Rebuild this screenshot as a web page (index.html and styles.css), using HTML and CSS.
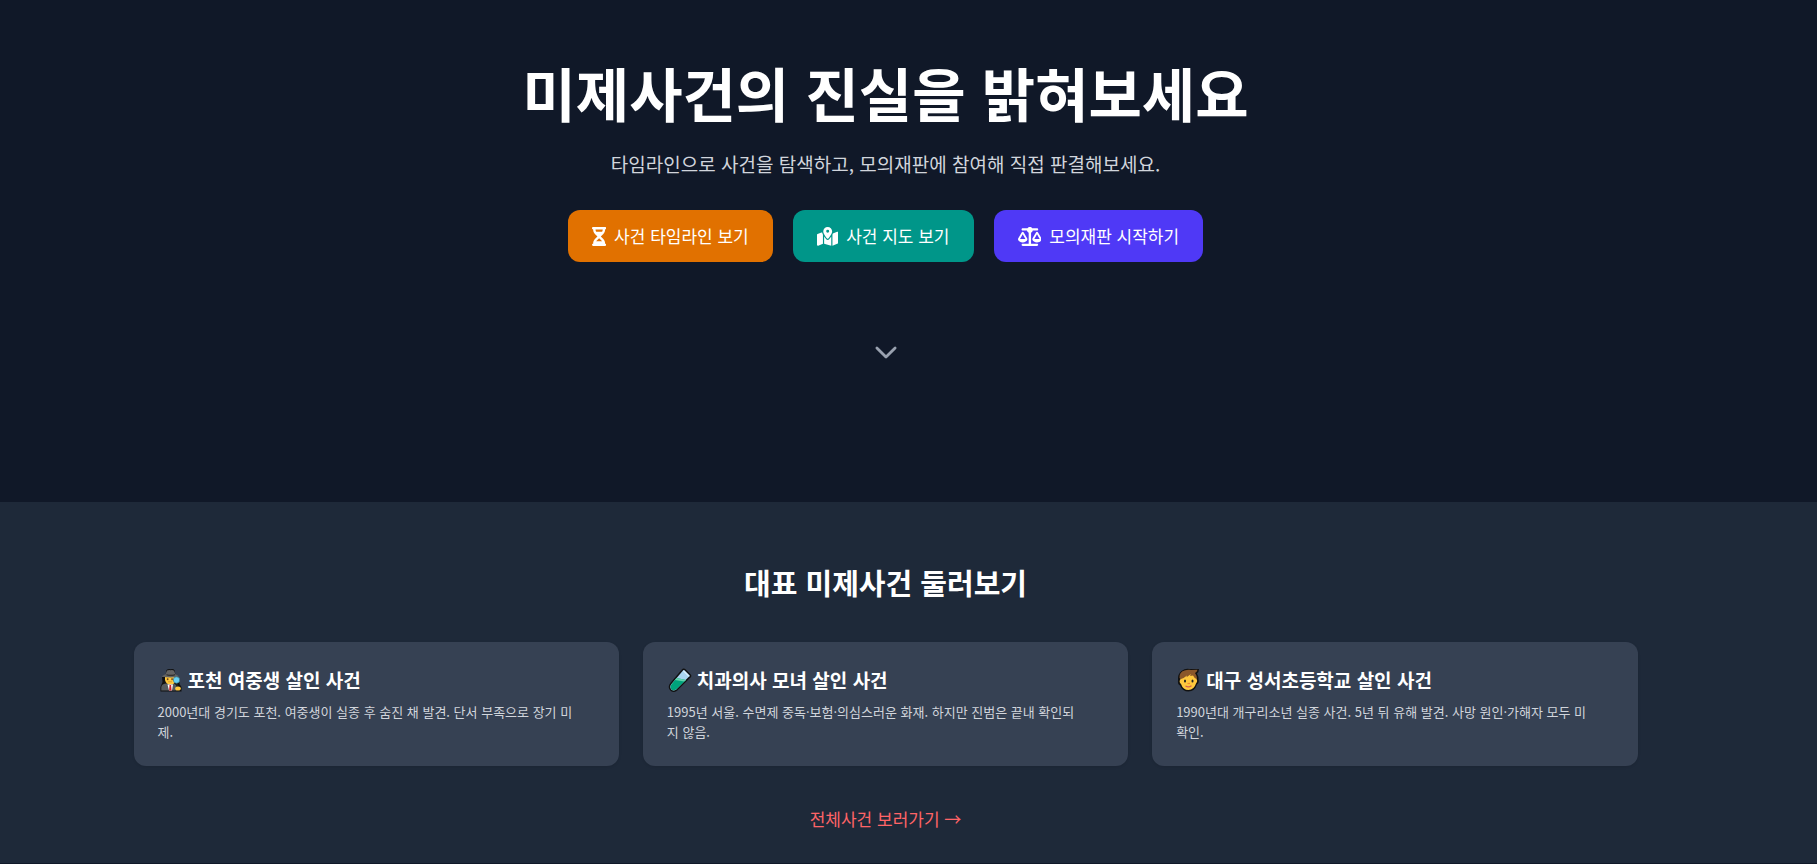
FILE: index.html
```html
<!DOCTYPE html>
<html lang="ko">
<head>
  <meta charset="UTF-8" />
  <meta name="viewport" content="width=device-width, initial-scale=1.0"/>
  <title>미제사건의 진실을 밝혀보세요</title>
  <link rel="stylesheet" href="styles.css">
</head>
<body>

  <!-- Hero -->
  <header class="hero">
    <h1>미제사건의 진실을 밝혀보세요</h1>
    <p class="subtitle">타임라인으로 사건을 탐색하고, 모의재판에 참여해 직접 판결해보세요.</p>
    <nav class="actions">
      <a class="btn btn-timeline" href="#timeline">
        <svg class="icon" viewBox="0 0 384 512" aria-hidden="true"><path d="M32 0C14.3 0 0 14.3 0 32S14.3 64 32 64V75c0 42.4 16.9 83.1 46.9 113.1L146.7 256 78.9 323.9C48.9 353.9 32 394.6 32 437v11c-17.7 0-32 14.3-32 32s14.3 32 32 32H64 320h32c17.7 0 32-14.3 32-32s-14.3-32-32-32V437c0-42.4-16.9-83.1-46.9-113.1L237.3 256l67.9-67.9c30-30 46.9-70.7 46.9-113.1V64c17.7 0 32-14.3 32-32s-14.3-32-32-32H320 64 32zM96 75V64H288V75c0 19-5.6 37.4-16 53H112c-10.3-15.6-16-34-16-53zm16 309c3.5-5.3 7.6-10.3 12.1-14.9L192 301.3l67.9 67.9c4.6 4.6 8.6 9.6 12.1 14.9H112z"/></svg>
        사건 타임라인 보기
      </a>
      <a class="btn btn-map" href="#map">
        <svg class="icon" viewBox="0 0 576 512" aria-hidden="true"><path d="M408 120c0 54.6-73.1 151.9-105.2 192c-7.7 9.6-22 9.6-29.6 0C241.1 271.9 168 174.6 168 120C168 53.7 221.7 0 288 0s120 53.7 120 120zm8 80.4c3.5-6.9 6.7-13.8 9.6-20.6c.5-1.2 1-2.5 1.5-3.7l116-46.4C558.9 123.4 576 135 576 152V422.8c0 9.8-6 18.6-15.1 22.3L416 503V200.4zM137.6 138.3c2.4 14.1 7.2 28.3 12.8 41.5c2.9 6.8 6.1 13.7 9.6 20.6V451.8L32.9 502.7C17.1 509 0 497.4 0 480.4V209.6c0-9.8 6-18.6 15.1-22.3l122.6-49zM327.8 332c13.9-17.4 35.7-45.7 56.2-77V504.3L192 449.4V255c20.5 31.3 42.3 59.6 56.2 77c20.5 25.6 59.1 25.6 79.6 0zM288 152a40 40 0 1 0 0-80 40 40 0 1 0 0 80z"/></svg>
        사건 지도 보기
      </a>
      <a class="btn btn-trial" href="#trial">
        <svg class="icon" viewBox="0 0 640 512" aria-hidden="true"><path d="M384 32H512c17.7 0 32 14.3 32 32s-14.3 32-32 32H398.4c-5.2 25.8-22.9 47.1-46.4 57.3V448H512c17.7 0 32 14.3 32 32s-14.3 32-32 32H320 128c-17.7 0-32-14.3-32-32s14.3-32 32-32H288V153.3c-23.5-10.3-41.2-31.6-46.4-57.3H128c-17.7 0-32-14.3-32-32s14.3-32 32-32H256c14.6-19.4 37.8-32 64-32s49.4 12.6 64 32zm55.6 288H584.4L512 195.8 439.6 320zM512 416c-62.9 0-115.2-34-126-78.9c-2.6-11 1-22.3 6.7-32.1l95.2-163.2c5-8.6 14.2-13.8 24.1-13.8s19.1 5.3 24.1 13.8l95.2 163.2c5.7 9.8 9.3 21.1 6.7 32.1C627.2 382 574.9 416 512 416zM126.8 195.8L54.4 320H199.3L126.8 195.8zM.9 337.1c-2.6-11 1-22.3 6.7-32.1l95.2-163.2c5-8.6 14.2-13.8 24.1-13.8s19.1 5.3 24.1 13.8l95.2 163.2c5.7 9.8 9.3 21.1 6.7 32.1C242 382 189.7 416 126.8 416S11.7 382 .9 337.1z"/></svg>
        모의재판 시작하기
      </a>
    </nav>
    <a class="scroll-down" href="#cases" aria-label="아래로 이동">
      <svg viewBox="0 0 24 24" aria-hidden="true"><path d="M4.200 8.500l7.800 7.800 7.800-7.800"/></svg>
    </a>
  </header>

  <!-- Cases -->
  <main class="cases" id="cases">
    <h2>대표 미제사건 둘러보기</h2>
    <div class="card-grid">
      <article class="card">
        <h3>
          <svg class="emoji" viewBox="0 0 24 24" aria-hidden="true">
            <path d="M3.5 9h2L7 6.500 8 2q2-1.500 4-.7 3-.8 4 .9L17 6.500l2 2.500 2 2v5l2 3v4.500H2V19l2-5z" fill="#111"/>
            <path d="M2.800 22.500v-3q0-3.500 4.500-4h7q4 .5 4 4v3z" fill="#555b5e"/>
            <path d="M6.500 9h11v3q-1 4.500-5.500 4.500T6.500 12z" fill="#ffc83d"/>
            <path d="M3 8.500q3-2 4-2.300L8.500 2.500q2-1 3.500-.3 2-.8 3.500.5L17 6.200q2 .8 3.500 2.300-8.500 2-17.500 0z" fill="#636363"/>
            <path d="M8 6.200q4 1 8.500 0v1q-4 1-8.500 0z" fill="#222"/>
            <path d="M9 16.500h5.500l-1 6h-3z" fill="#fff"/>
            <path d="M11 17h1.600l.5 5.500h-2.500z" fill="#d12229"/>
            <path d="M8.500 10.500h1.200v1.500H8.500zM13 10.500h1.200v1.500H13zM9.500 13.800h4" fill="#222" stroke="#a86a25" stroke-width=".5"/>
            <path d="M18 15l1.300 4" stroke="#222" stroke-width="1.500"/>
            <circle cx="18" cy="12" r="3.200" fill="#66d1f5" stroke="#3a7888" stroke-width=".7"/>
            <ellipse cx="19.500" cy="20.500" rx="2.800" ry="2" fill="#ffc83d"/>
          </svg>
          포천 여중생 살인 사건
        </h3>
        <p>2000년대 경기도 포천. 여중생이 실종 후 숨진 채 발견. 단서 부족으로 장기 미제.</p>
      </article>
      <article class="card">
        <h3>
          <svg class="emoji" viewBox="0 0 24 24" aria-hidden="true">
            <path d="M14.500 2.500q1.500-2.200 3-.7l5 5q1.500 1.600-.9 2.900L9.500 21.800q-3.500 2.800-6.200.2-2.700-3 .1-6.400z" fill="#a9d5f0" stroke="#111" stroke-width="1.500"/>
            <path d="M9 10l9.500 2-9.600 9.200q-2.600 2-4.900.2-2-2.500.1-5.200z" fill="#00a37c"/>
            <path d="M9 10l9.500 2-2 1.500L7.500 12z" fill="#63d4ad"/>
            <path d="M16 2.800l5.300 5.400" stroke="#e2f3fd" stroke-width="1.200"/>
          </svg>
          치과의사 모녀 살인 사건
        </h3>
        <p>1995년 서울. 수면제 중독·보험·의심스러운 화재. 하지만 진범은 끝내 확인되지 않음.</p>
      </article>
      <article class="card">
        <h3>
          <svg class="emoji" viewBox="0 0 24 24" aria-hidden="true">
            <path d="M5 3q4-3 8-2h9.500q0 3-2 4.500 1.800 3 1.500 6 1 3-1.500 5-2.500 7-8.500 7t-8.500-6Q1 16.500 1.500 12 1 6 5 3z" fill="#111"/>
            <path d="M4 11q0-6 8-6t8 6q1.500 2-.5 4.500-2 6.500-7.500 6.500T4.500 16Q2 14 4 11z" fill="#ffc83d"/>
            <path d="M3 10q-.5-6 5-7.500 3-1 6.500-.6L21 1.800q-.5 2.300-2.500 3.200 2 2.500 2 6.300-2.500-.5-4-3.800l-3 .6 1-2-4.500 3.200.5-1.800Q7 10.500 4.500 11z" fill="#8b572a"/>
            <ellipse cx="8.500" cy="13" rx="1" ry="1.500" fill="#222"/>
            <ellipse cx="16" cy="13" rx="1" ry="1.500" fill="#222"/>
            <path d="M11 15.500h2.500" stroke="#f28b2e" stroke-width="1.200"/>
            <path d="M9 18q3 2 6-.3" fill="none" stroke="#d6624c" stroke-width="1.200"/>
          </svg>
          대구 성서초등학교 살인 사건
        </h3>
        <p>1990년대 개구리소년 실종 사건. 5년 뒤 유해 발견. 사망 원인·가해자 모두 미확인.</p>
      </article>
    </div>
    <a class="more-link" href="#all">전체사건 보러가기 →</a>
  </main>

</body>
</html>
```
FILE: styles.css
```css
* {
  box-sizing: border-box;
}

body {
  font-family: "Noto Sans CJK KR", sans-serif;
  margin: 0;
  background-color: #101828;
  color: white;
}

h1, h2, h3, p {
  margin: 0;
}

a {
  color: inherit;
  text-decoration: none;
}

/* Hero */
.hero {
  display: flex;
  flex-direction: column;
  align-items: center;
  text-align: center;
  padding: 62px 46px 134px 0;
}

.hero h1 {
  font-size: 58px;
  line-height: 60px;
  font-weight: 700;
  margin-bottom: 28px;
}

.subtitle {
  font-size: 19px;
  line-height: 28px;
  color: #d1d5dc;
  margin-bottom: 32px;
}

.actions {
  display: flex;
  flex-wrap: wrap;
  justify-content: center;
  gap: 20px;
}

.btn {
  display: flex;
  align-items: center;
  gap: 8px;
  padding: 12px 24px;
  border-radius: 12px;
  font-size: 17px;
  line-height: 28px;
}

.btn-timeline {
  background-color: #e17100;
}

.btn-map {
  background-color: #009689;
}

.btn-trial {
  background-color: #4f39f6;
}

.icon {
  height: 19px;
  fill: currentColor;
}

.scroll-down {
  margin-top: 74px;
  color: #99a1af;
}

.scroll-down svg {
  display: block;
  width: 28px;
  height: 32px;
  fill: none;
  stroke: currentColor;
  stroke-width: 2.4;
  stroke-linecap: round;
  stroke-linejoin: round;
}

/* Cases */
.cases {
  display: flex;
  flex-direction: column;
  align-items: center;
  background-color: #1e2939;
  padding: 62px 62px 30px 16px;
}

.cases h2 {
  font-size: 29px;
  line-height: 36px;
  margin-bottom: 42px;
}

.card-grid {
  display: grid;
  grid-template-columns: repeat(3, 1fr);
  gap: 24px;
  width: 100%;
  max-width: 1504px;
  margin-bottom: 39px;
}

.card {
  background-color: #364153;
  border-radius: 12px;
  padding: 24px;
  box-shadow: 0 1px 3px rgba(0, 0, 0, 0.1);
}

.card h3 {
  display: flex;
  align-items: center;
  gap: 5px;
  font-size: 19px;
  line-height: 28px;
  margin-bottom: 8px;
}

.emoji {
  width: 25px;
  height: 24px;
  flex-shrink: 0;
}

.card p {
  font-size: 13px;
  line-height: 20px;
  color: #d1d5dc;
  padding-right: 20px;
}

.more-link {
  font-size: 17px;
  line-height: 28px;
  color: #ff6467;
}

@media (max-width: 900px) {
  .hero {
    padding-left: 16px;
    padding-right: 16px;
  }

  .cases {
    padding-right: 16px;
  }

  .card-grid {
    grid-template-columns: 1fr;
  }
}
```
